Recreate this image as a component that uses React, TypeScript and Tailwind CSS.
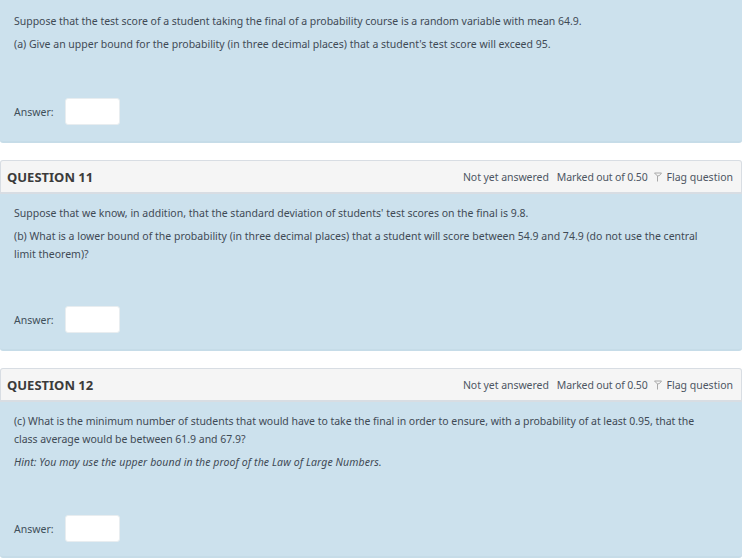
import { ReactNode } from 'react';

function Flag() {
  return (
    <svg width="8" height="10" viewBox="0 0 8 10" fill="none" className="shrink-0">
      <path d="M0.5 1h7L5.5 3.5 3.5 4v5.5" stroke="#a8a8a8" strokeWidth="1" strokeLinejoin="round" />
      <path d="M0.5 1l3 3" stroke="#a8a8a8" strokeWidth="1" />
    </svg>
  );
}

function Header({ n }: { n: number }) {
  return (
    <div className="flex h-[34px] items-center justify-between rounded-t-[3px] border border-b-2 border-[#d8dde3] bg-[#f5f5f5] pl-[6px] pr-2">
      <h3 className="text-[13px] font-bold text-[#3b3b3b]">QUESTION {n}</h3>
      <div className="flex items-center text-[#4d5563]">
        <span className="tracking-[-0.05px]">Not yet answered</span>
        <span className="ml-[8px] tracking-[-0.15px]">Marked out of 0.50</span>
        <span className="ml-[6px] mr-[5px]"><Flag /></span>
        <span>Flag question</span>
      </div>
    </div>
  );
}

function Answer() {
  return (
    <div className="flex items-center">
      <span className="w-[51px] text-[#3f4f5a]">Answer:</span>
      <div className="h-[27px] w-[55px] rounded-[3px] border border-[#e8edf0] bg-white" />
    </div>
  );
}

function Body({ children, className }: { children: ReactNode; className: string }) {
  return (
    <div className={`rounded-b-[3px] border-b-2 border-[#c6dce8] bg-[#cce1ed] pl-[14px] pr-[30px] ${className}`}>
      {children}
    </div>
  );
}

export default function App() {
  return (
    <div className="w-[742px] bg-white font-['Noto_Sans',sans-serif] text-[10.5px] leading-[18px] text-[#3f4a55]">
      <Body className="h-[143px] pt-[12px]">
        <p className="tracking-[-0.025px]">Suppose that the test score of a student taking the final of a probability course is a random variable with mean 64.9.</p>
        <p className="mt-[5px]">(a) Give an upper bound for the probability (in three decimal places) that a student's test score will exceed 95.</p>
        <div className="mt-[45px]"><Answer /></div>
      </Body>

      <div className="mt-[17px]">
        <Header n={11} />
        <Body className="h-[157px] pt-[10px]">
          <p>Suppose that we know, in addition, that the standard deviation of students' test scores on the final is 9.8.</p>
          <p className="mt-[5px]">(b) What is a lower bound of the probability (in three decimal places) that a student will score between 54.9 and 74.9 (do not use the central limit theorem)?</p>
          <div className="mt-[43px]"><Answer /></div>
        </Body>
      </div>

      <div className="mt-[17px]">
        <Header n={12} />
        <Body className="h-[156px] pt-[10px]">
          <p className="tracking-[-0.03px]">(c) What is the minimum number of students that would have to take the final in order to ensure, with a probability of at least 0.95, that the class average would be between 61.9 and 67.9?</p>
          <p className="mt-[5px] italic tracking-[0.09px]">Hint: You may use the upper bound in the proof of the Law of Large Numbers.</p>
          <div className="mt-[44px]"><Answer /></div>
        </Body>
      </div>
    </div>
  );
}
